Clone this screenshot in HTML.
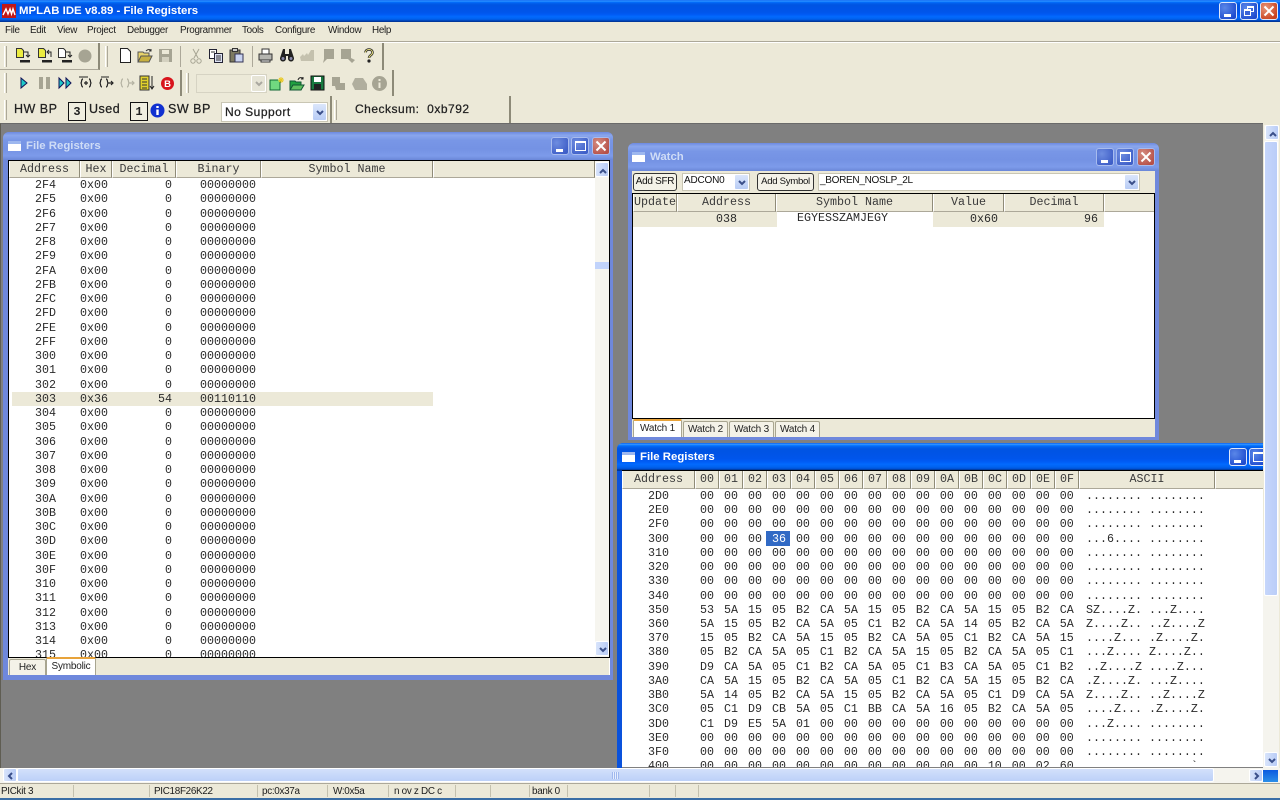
<!DOCTYPE html>
<html><head><meta charset="utf-8"><title>MPLAB IDE v8.89 - File Registers</title>
<style>
html,body{margin:0;padding:0;width:1280px;height:800px;overflow:hidden;background:#ece9d8}
*{box-sizing:border-box}
#app{position:relative;width:1280px;height:800px;overflow:hidden;font-family:"Liberation Sans",sans-serif;color:#000;filter:blur(.3px)}
.a{position:absolute}
.t{position:absolute;white-space:nowrap}
pre{margin:0;position:absolute;font-family:"Liberation Mono",monospace;font-size:11.67px;white-space:pre;color:#2a2a2a}
.hd{position:absolute;background:#ece9d8;border-right:1px solid #8f8b78;border-left:1px solid #fff;border-bottom:1px solid #aca899;font-family:"Liberation Mono",monospace;font-size:11.67px;text-align:center;color:#3a3a3a;white-space:nowrap;overflow:hidden}
.act{background:linear-gradient(#0058ee,#3593ff 4%,#288eff 6%,#127dff 8%,#036ffc 10%,#0262ee 14%,#0057e5 20%,#0054e3 24%,#0055eb 56%,#005bf5 66%,#026afe 76%,#0062ef 86%,#0052d6 92%,#0040ab 94%,#003092 100%)}
.ina{background:linear-gradient(#6d8ae0,#8aa6ec 12%,#7896e6 30%,#7492e4 60%,#7d9bea 85%,#6a86d8)}
.btn{position:absolute;width:18px;height:18px;border:1px solid #dfe8fb;border-radius:3px;background:radial-gradient(circle at 30% 30%,#5a87e8,#1f4ccf 80%)}
.btn.c{background:radial-gradient(circle at 30% 30%,#e8967a,#c9421f 80%)}
.ib{border-color:#a8bcee;background:radial-gradient(circle at 30% 30%,#6e8de0,#3f5fc8 80%)}
.ib.c{background:radial-gradient(circle at 30% 30%,#d58c80,#b65048 80%)}
.sb{position:absolute;border:1px solid #fff;border-radius:2px;background:linear-gradient(90deg,#d8e4fb,#b9ccf6);width:14px;height:15px}
.tab{position:absolute;background:#f4f2e8;border:1px solid #a8a590;border-bottom:0;font-size:10px;letter-spacing:-.2px;text-align:center;color:#222;white-space:nowrap;border-radius:2px 2px 0 0}
.tab.s{background:#fff;border-top:2px solid #e8a33a}
.tb{position:absolute;background:#ece9d8;border-right:2px solid #8d8a78;border-bottom:1px solid #aca899}
.grip{position:absolute;width:3px;background:#ece9d8;border-left:1px solid #fff;border-right:1px solid #aca899}
.sep{position:absolute;width:1px;background:#aca899}
svg{position:absolute;overflow:visible}
.m{position:absolute;font-size:9.9px;letter-spacing:-.3px;top:25px;color:#1c1c1c;white-space:nowrap}
.st{position:absolute;font-size:9.9px;letter-spacing:-.3px;top:786px;color:#1c1c1c;white-space:nowrap}
.ss{position:absolute;top:785px;height:12px;width:1px;background:#c4c1ae}
.combo{position:absolute;background:#fff;border:1px solid #c9c6b4}
.pb{position:absolute;border:1px solid #333;border-radius:3px;background:#f4f2e8;font-size:10px;letter-spacing:-.3px;text-align:center;white-space:nowrap;color:#111;overflow:hidden}
.dd{position:absolute;background:linear-gradient(#dbe6fb,#b8ccf5);border:1px solid #fff;border-radius:2px}
.box{position:absolute;border:1px solid #111;background:#f0eee0;font-family:"Liberation Mono",monospace;font-size:12px;text-align:center;font-weight:bold;color:#222}
.b3{font-size:12.5px;color:#222;letter-spacing:.5px;-webkit-text-stroke:.25px #222}
.wt{position:absolute;white-space:nowrap;font-size:11.4px;font-weight:bold}
</style></head><body><div id="app">

<!-- main title -->
<div class="a act" style="left:0;top:0;width:1280px;height:22px"></div>
<svg style="left:2px;top:4px" width="14" height="14" viewBox="0 0 14 14"><rect width="14" height="14" fill="#c01818"/><path d="M1 11L4 5l2 5 2-5 1.500 5L11 5l2 6" stroke="#fff" stroke-width="1.400" fill="none"/></svg>
<div class="wt" style="left:19px;top:5px;color:#fff">MPLAB IDE v8.89 - File Registers</div>
<div class="btn" style="left:1219px;top:2px"><div class="a" style="left:4px;top:11px;width:7px;height:3px;background:#fff"></div></div>
<div class="btn" style="left:1240px;top:2px"><div class="a" style="left:6px;top:3px;width:7px;height:6px;border:1px solid #fff;border-top-width:2px"></div><div class="a" style="left:3px;top:6px;width:7px;height:7px;border:1px solid #fff;border-top-width:2px;background:#3a63d8"></div></div>
<div class="btn c" style="left:1260px;top:2px"><svg width="16" height="16" viewBox="0 0 16 16"><path d="M3.500 3.500l9 9M12.500 3.500l-9 9" stroke="#fff" stroke-width="2"/></svg></div>

<!-- menu -->
<div class="a" style="left:0;top:22px;width:1280px;height:19px;background:#ece9d8"></div>
<div class="a" style="left:0;top:41px;width:1280px;height:1px;background:#aca899"></div>
<div class="a" style="left:0;top:42px;width:1280px;height:1px;background:#fff"></div>
<div class="m" style="left:5px">File</div><div class="m" style="left:30px">Edit</div><div class="m" style="left:57px">View</div><div class="m" style="left:87px">Project</div><div class="m" style="left:127px">Debugger</div><div class="m" style="left:180px">Programmer</div><div class="m" style="left:242px">Tools</div><div class="m" style="left:275px">Configure</div><div class="m" style="left:328px">Window</div><div class="m" style="left:372px">Help</div>

<!-- toolbars -->
<div class="tb" style="left:0;top:43px;width:100px;height:27px"></div>
<div class="tb" style="left:100px;top:43px;width:284px;height:27px;border-bottom:0"></div>
<div class="grip" style="left:4px;top:46px;height:21px"></div>
<div class="grip" style="left:105px;top:46px;height:21px"></div>
<div class="sep" style="left:180px;top:46px;height:21px"></div>
<div class="sep" style="left:252px;top:46px;height:21px"></div>
<div class="tb" style="left:0;top:70px;width:182px;height:26px;border-bottom:0"></div>
<div class="tb" style="left:182px;top:70px;width:212px;height:26px;border-bottom:0"></div>
<div class="grip" style="left:4px;top:73px;height:20px"></div>
<div class="grip" style="left:186px;top:73px;height:20px"></div>

<!-- row 1 icons -->
<svg style="left:15px;top:48px" width="16" height="16" viewBox="0 0 16 16"><path d="M1.500.5h5l2 2v7h-7z" fill="#ecec40" stroke="#333"/><path d="M9 4h4v4m-2-1l2 2 2-2" stroke="#222" fill="none"/><path d="M5 12h10v2.500H5z" fill="#222"/></svg>
<svg style="left:37px;top:48px" width="16" height="16" viewBox="0 0 16 16"><path d="M1.500.5h5l2 2v7h-7z" fill="#ecec40" stroke="#333"/><path d="M14 9V4h-4m2-2l-2 2 2 2" stroke="#222" fill="none"/><path d="M5 12h10v2.500H5z" fill="#222"/></svg>
<svg style="left:57px;top:48px" width="16" height="16" viewBox="0 0 16 16"><path d="M1.500.5h5l2 2v7h-7z" fill="#fff" stroke="#333"/><path d="M9 4h4v4m-2-1l2 2 2-2" stroke="#222" fill="none"/><path d="M5 12h10v2.500H5z" fill="#222"/></svg>
<svg style="left:78px;top:49px" width="14" height="14" viewBox="0 0 14 14"><circle cx="7" cy="7" r="6.500" fill="#a6a493"/></svg>
<svg style="left:119px;top:48px" width="13" height="15" viewBox="0 0 13 15"><path d="M1.500.5h7l3 3v11h-10z" fill="#fff" stroke="#222"/></svg>
<svg style="left:137px;top:48px" width="16" height="15" viewBox="0 0 16 15"><path d="M1 4h5l1 1h5v9H1z" fill="#e8d36a" stroke="#555"/><path d="M1 14l3-6h11l-3 6z" fill="#c7b040" stroke="#555"/><path d="M9 3c2-2 4-2 5 0m0-2v2h-2" stroke="#333" fill="none"/></svg>
<svg style="left:159px;top:49px" width="13" height="13" viewBox="0 0 13 13"><rect width="13" height="13" fill="#a6a493"/><rect x="3" y="1" width="7" height="4" fill="#ece9d8"/><rect x="3" y="8" width="7" height="5" fill="#d4d1c0"/></svg>
<svg style="left:190px;top:48px" width="12" height="16" viewBox="0 0 12 16"><path d="M3 1l5 9M9 1l-5 9" stroke="#a6a493" fill="none"/><circle cx="3" cy="13" r="2.200" fill="none" stroke="#a6a493"/><circle cx="9" cy="13" r="2.200" fill="none" stroke="#a6a493"/></svg>
<svg style="left:209px;top:49px" width="14" height="14" viewBox="0 0 14 14"><path d="M.5.5h7v9h-7z" fill="#fff" stroke="#223"/><path d="M5.500 4.500h8v9h-8z" fill="#dde2f5" stroke="#223"/><path d="M7 7h5M7 9h5M7 11h5M2 3h4" stroke="#333"/></svg>
<svg style="left:229px;top:48px" width="15" height="15" viewBox="0 0 15 15"><rect x="1" y="2" width="10" height="12" fill="#7d7a60" stroke="#333"/><rect x="3.500" y="0.500" width="5" height="3" fill="#ccc" stroke="#333"/><rect x="6" y="6" width="8" height="8" fill="#c9d3f0" stroke="#335"/></svg>
<svg style="left:258px;top:48px" width="15" height="15" viewBox="0 0 15 15"><path d="M4 1h7v5H4z" fill="#fff" stroke="#333"/><path d="M1 6h13v6H1z" fill="#b5b5b0" stroke="#333"/><path d="M3 12h9v2H3z" fill="#fff" stroke="#333"/></svg>
<svg style="left:279px;top:49px" width="16" height="13" viewBox="0 0 16 13"><path d="M4 0h2v5h4V0h2l3 9a3 3 0 01-6 1V7H7v3a3 3 0 01-6-1z" fill="#222"/><circle cx="4" cy="9.500" r="1.500" fill="#88a"/><circle cx="12" cy="9.500" r="1.500" fill="#88a"/></svg>
<svg style="left:300px;top:49px" width="15" height="13" viewBox="0 0 15 13"><path d="M0 8l3-3 1 2 3-3 1 2 3-5h3v11H1z" fill="#c4c1ae"/></svg>
<svg style="left:320px;top:49px" width="14" height="14" viewBox="0 0 14 14"><path d="M4 0h10v10H7l-4 4 1-4z" fill="#a6a493"/></svg>
<svg style="left:341px;top:49px" width="14" height="14" viewBox="0 0 14 14"><path d="M0 0h10v9l4 2-3 3-4-4H0z" fill="#a6a493"/></svg>
<svg style="left:363px;top:48px" width="12" height="15" viewBox="0 0 12 15"><path d="M2.500 4.500c0-4 7-4 7 0 0 3-3.500 2.500-3.500 5.500" stroke="#222" stroke-width="2.400" fill="none"/><path d="M2.500 4.500c0-4 7-4 7 0 0 3-3.500 2.500-3.500 5.500" stroke="#e8e080" stroke-width="1" fill="none"/><circle cx="6" cy="13" r="1.600" fill="#222"/></svg>

<!-- row 2 icons -->
<svg style="left:20px;top:77px" width="8" height="12" viewBox="0 0 8 12"><path d="M1 1l6 5-6 5z" fill="#1ec8c8" stroke="#115"/></svg>
<svg style="left:39px;top:77px" width="11" height="12" viewBox="0 0 11 12"><path d="M0 0h4v12H0zM7 0h4v12H7z" fill="#a6a493"/></svg>
<svg style="left:58px;top:77px" width="14" height="12" viewBox="0 0 14 12"><path d="M1 1l5 5-5 5zM8 1l5 5-5 5z" fill="#1ec8c8" stroke="#115"/></svg>
<svg style="left:78px;top:76px" width="15" height="15" viewBox="0 0 15 15"><path d="M1 1h9" stroke="#222"/><path d="M5 3c-2 0-1 3-2 4 1 1 0 4 2 4M11 3c2 0 1 3 2 4-1 1 0 4-2 4M6 7h4m-2-2v4" stroke="#222" fill="none" stroke-width="1.200"/></svg>
<svg style="left:99px;top:76px" width="15" height="15" viewBox="0 0 15 15"><path d="M2 1h8" stroke="#222"/><path d="M3 3c-2 0-1 3-2 4 1 1 0 4 2 4M7 3c2 0 1 3 2 4-1 1 0 4-2 4M9 7h5m-2-2l2 2-2 2" stroke="#222" fill="none" stroke-width="1.200"/></svg>
<svg style="left:120px;top:76px" width="15" height="15" viewBox="0 0 15 15"><path d="M3 3c-2 0-1 3-2 4 1 1 0 4 2 4M7 3c2 0 1 3 2 4-1 1 0 4-2 4M9 7h5m-2-2l2 2-2 2" stroke="#b4b2a2" fill="none" stroke-width="1.200"/></svg>
<svg style="left:139px;top:75px" width="16" height="16" viewBox="0 0 16 16"><rect x="1" y="1" width="9" height="14" fill="#e2d22c" stroke="#333"/><path d="M3 4h5M3 7h5M3 10h5M3 13h5" stroke="#333"/><path d="M13 1v12m-2-2l2 3 2-3" stroke="#222" fill="none"/></svg>
<svg style="left:161px;top:77px" width="13" height="13" viewBox="0 0 13 13"><circle cx="6.500" cy="6.500" r="6.500" fill="#d8141c"/><text x="6.500" y="10" font-size="9.500" font-weight="bold" fill="#fff" text-anchor="middle" font-family="Liberation Sans">B</text></svg>
<div class="a" style="left:196px;top:74px;width:71px;height:19px;background:#ece9d8;border:1px solid #d6d3c3"></div>
<div class="dd" style="left:251px;top:75px;width:15px;height:17px;background:#e6e4d6"><svg style="left:3px;top:5px" width="8" height="6" viewBox="0 0 8 6"><path d="M1 1l3 3 3-3" stroke="#aaa8a0" stroke-width="2" fill="none"/></svg></div>
<svg style="left:269px;top:76px" width="16" height="15" viewBox="0 0 16 15"><rect x="1" y="4" width="10" height="10" fill="#70d880" stroke="#163"/><path d="M12 1v6M9 4h6M10 2l4 4M14 2l-4 4" stroke="#e8c820"/></svg>
<svg style="left:289px;top:76px" width="16" height="15" viewBox="0 0 16 15"><path d="M1 5h5l1 1h5v8H1z" fill="#20a040" stroke="#153"/><path d="M1 14l3-5h11l-3 5z" fill="#60c060" stroke="#153"/><path d="M9 4c1-3 4-3 5-1m0-2v2h-2" stroke="#222" fill="none"/></svg>
<svg style="left:311px;top:76px" width="13" height="14" viewBox="0 0 13 14"><rect width="13" height="14" fill="#187a40" stroke="#111"/><rect x="3" y="1" width="7" height="5" fill="#fff"/><rect x="3" y="8" width="7" height="6" fill="#222"/></svg>
<svg style="left:331px;top:76px" width="15" height="15" viewBox="0 0 15 15"><path d="M1 1h8v6h5v7H5l-1-4H1z" fill="#a6a493"/></svg>
<svg style="left:352px;top:78px" width="15" height="12" viewBox="0 0 15 12"><path d="M3 0h8l4 6v6H3L0 6z" fill="#b0ae9e"/></svg>
<svg style="left:372px;top:76px" width="15" height="15" viewBox="0 0 15 15"><circle cx="7.500" cy="7.500" r="7.500" fill="#a6a493"/><path d="M6.500 3h2v2h-2zM6.500 6.500h2V12h-2z" fill="#ece9d8"/></svg>

<!-- row 3 -->
<div class="a" style="left:0;top:96px;width:1280px;height:27px;background:#ece9d8"></div>
<div class="a" style="left:330px;top:96px;width:2px;height:27px;background:#8d8a78"></div>
<div class="a" style="left:509px;top:96px;width:2px;height:27px;background:#8d8a78"></div>
<div class="grip" style="left:4px;top:100px;height:20px"></div>
<div class="grip" style="left:334px;top:100px;height:20px"></div>
<div class="t b3" style="left:14px;top:102px">HW BP</div>
<div class="box" style="left:68px;top:102px;width:18px;height:19px;line-height:18px">3</div>
<div class="t b3" style="left:89px;top:102px">Used</div>
<div class="box" style="left:130px;top:102px;width:18px;height:19px;line-height:18px">1</div>
<svg style="left:150px;top:103px" width="15" height="15" viewBox="0 0 15 15"><circle cx="7.500" cy="7.500" r="7" fill="#1030d0"/><path d="M6.300 3h2.400v2H6.300zM6.300 6.500h2.400V12H6.300z" fill="#fff"/></svg>
<div class="t b3" style="left:168px;top:102px">SW BP</div>
<div class="combo" style="left:221px;top:102px;width:107px;height:20px"></div>
<div class="t b3" style="left:225px;top:105px;font-size:12px">No Support</div>
<div class="dd" style="left:312px;top:103px;width:15px;height:18px"><svg style="left:3px;top:6px" width="8" height="6" viewBox="0 0 8 6"><path d="M1 1l3 3 3-3" stroke="#3a4f8a" stroke-width="2" fill="none"/></svg></div>
<div class="t b3" style="left:355px;top:102px;font-size:12px;letter-spacing:.5px;white-space:pre">Checksum:  0xb792</div>

<!-- MDI -->
<div class="a" style="left:0;top:123px;width:1265px;height:645px;background:#808080;border-left:1px solid #5f5d52;border-top:1px solid #6a6a6a"></div>

<!-- Left window -->
<div class="a ina" style="left:3px;top:132px;width:610px;height:548px;border-radius:6px 6px 0 0;background:#6f88dc"></div>
<div class="a ina" style="left:3px;top:132px;width:610px;height:28px;border-radius:6px 6px 0 0"></div>
<div class="a" style="left:8px;top:141px;width:13px;height:10px;background:#fff;border-top:3px solid #9db7ef"></div>
<div class="wt" style="left:26px;top:140px;color:#cfdcf6">File Registers</div>
<div class="btn ib" style="left:551px;top:137px"><div class="a" style="left:4px;top:11px;width:7px;height:3px;background:#fff"></div></div>
<div class="btn ib" style="left:571px;top:137px"><div class="a" style="left:3px;top:3px;width:11px;height:10px;border:1px solid #fff;border-top-width:2px"></div></div>
<div class="btn ib c" style="left:592px;top:137px"><svg width="16" height="16" viewBox="0 0 16 16"><path d="M3.500 3.500l9 9M12.500 3.500l-9 9" stroke="#fff" stroke-width="2"/></svg></div>
<div class="a" style="left:8px;top:160px;width:602px;height:498px;background:#fff;border:1px solid #000;overflow:hidden">
 <div class="hd" style="left:0;top:0;width:71px;height:17px;line-height:16px">Address</div>
 <div class="hd" style="left:71px;top:0;width:32px;height:17px;line-height:16px">Hex</div>
 <div class="hd" style="left:103px;top:0;width:64px;height:17px;line-height:16px">Decimal</div>
 <div class="hd" style="left:167px;top:0;width:85px;height:17px;line-height:16px">Binary</div>
 <div class="hd" style="left:252px;top:0;width:172px;height:17px;line-height:16px">Symbol Name</div>
 <div class="hd" style="left:424px;top:0;width:162px;height:17px;line-height:16px"></div>
 <div class="a" style="left:3px;top:231px;width:421px;height:14px;background:#ece9d8"></div>
 <pre style="left:26px;top:17px;line-height:14.25px">2F4
2F5
2F6
2F7
2F8
2F9
2FA
2FB
2FC
2FD
2FE
2FF
300
301
302
303
304
305
306
307
308
309
30A
30B
30C
30D
30E
30F
310
311
312
313
314
315</pre>
 <pre style="left:71px;top:17px;line-height:14.25px">0x00
0x00
0x00
0x00
0x00
0x00
0x00
0x00
0x00
0x00
0x00
0x00
0x00
0x00
0x00
0x36
0x00
0x00
0x00
0x00
0x00
0x00
0x00
0x00
0x00
0x00
0x00
0x00
0x00
0x00
0x00
0x00
0x00
0x00</pre>
 <pre style="left:149px;top:17px;line-height:14.25px"> 0
 0
 0
 0
 0
 0
 0
 0
 0
 0
 0
 0
 0
 0
 0
54
 0
 0
 0
 0
 0
 0
 0
 0
 0
 0
 0
 0
 0
 0
 0
 0
 0
 0</pre>
 <pre style="left:191px;top:17px;line-height:14.25px">00000000
00000000
00000000
00000000
00000000
00000000
00000000
00000000
00000000
00000000
00000000
00000000
00000000
00000000
00000000
00110110
00000000
00000000
00000000
00000000
00000000
00000000
00000000
00000000
00000000
00000000
00000000
00000000
00000000
00000000
00000000
00000000
00000000
00000000</pre>
 <div class="a" style="left:586px;top:0;width:14px;height:496px;background:#f6f5ef"></div>
 <div class="sb" style="left:586px;top:1px"><svg style="left:3px;top:5px" width="8" height="6" viewBox="0 0 8 6"><path d="M1 5l3-3 3 3" stroke="#3a4f8a" stroke-width="2" fill="none"/></svg></div>
 <div class="a" style="left:586px;top:101px;width:14px;height:7px;background:#c1d3fb"></div>
 <div class="sb" style="left:586px;top:480px"><svg style="left:3px;top:5px" width="8" height="6" viewBox="0 0 8 6"><path d="M1 1l3 3 3-3" stroke="#3a4f8a" stroke-width="2" fill="none"/></svg></div>
</div>
<div class="a" style="left:8px;top:658px;width:602px;height:17px;background:#ece9d8;border-right:1px solid #fff"></div>
<div class="tab" style="left:9px;top:659px;width:37px;height:16px;line-height:16px">Hex</div>
<div class="tab s" style="left:46px;top:657px;width:50px;height:18px;line-height:15px">Symbolic</div>

<!-- Watch -->
<div class="a" style="left:628px;top:143px;width:531px;height:297px;background:#6f88dc;border-radius:6px 6px 0 0"></div>
<div class="a ina" style="left:628px;top:143px;width:531px;height:28px;border-radius:6px 6px 0 0"></div>
<div class="a" style="left:632px;top:152px;width:13px;height:10px;background:#fff;border-top:3px solid #9db7ef"></div>
<div class="wt" style="left:650px;top:151px;color:#cfdcf6">Watch</div>
<div class="btn ib" style="left:1096px;top:148px"><div class="a" style="left:4px;top:11px;width:7px;height:3px;background:#fff"></div></div>
<div class="btn ib" style="left:1116px;top:148px"><div class="a" style="left:3px;top:3px;width:11px;height:10px;border:1px solid #fff;border-top-width:2px"></div></div>
<div class="btn ib c" style="left:1137px;top:148px"><svg width="16" height="16" viewBox="0 0 16 16"><path d="M3.500 3.500l9 9M12.500 3.500l-9 9" stroke="#fff" stroke-width="2"/></svg></div>
<div class="a" style="left:632px;top:171px;width:523px;height:266px;background:#ece9d8"></div>
<div class="pb" style="left:633px;top:173px;width:44px;height:18px;line-height:16px">Add SFR</div>
<div class="combo" style="left:682px;top:173px;width:68px;height:18px"></div>
<div class="t" style="left:684px;top:175px;font-size:10px;letter-spacing:-.2px;color:#111">ADCON0</div>
<div class="dd" style="left:734px;top:174px;width:15px;height:16px"><svg style="left:3px;top:5px" width="8" height="6" viewBox="0 0 8 6"><path d="M1 1l3 3 3-3" stroke="#3a4f8a" stroke-width="2" fill="none"/></svg></div>
<div class="pb" style="left:757px;top:173px;width:57px;height:18px;line-height:16px;font-size:9.6px">Add Symbol</div>
<div class="combo" style="left:818px;top:173px;width:322px;height:18px"></div>
<div class="t" style="left:820px;top:175px;font-size:10px;letter-spacing:-.3px;color:#111">_BOREN_NOSLP_2L</div>
<div class="dd" style="left:1124px;top:174px;width:15px;height:16px"><svg style="left:3px;top:5px" width="8" height="6" viewBox="0 0 8 6"><path d="M1 1l3 3 3-3" stroke="#3a4f8a" stroke-width="2" fill="none"/></svg></div>
<div class="a" style="left:632px;top:193px;width:523px;height:226px;background:#fff;border:1px solid #000;overflow:hidden">
 <div class="hd" style="left:0;top:0;width:44px;height:18px;line-height:16px">Update</div>
 <div class="hd" style="left:44px;top:0;width:99px;height:18px;line-height:16px">Address</div>
 <div class="hd" style="left:143px;top:0;width:157px;height:18px;line-height:16px">Symbol Name</div>
 <div class="hd" style="left:300px;top:0;width:71px;height:18px;line-height:16px">Value</div>
 <div class="hd" style="left:371px;top:0;width:100px;height:18px;line-height:16px">Decimal</div>
 <div class="hd" style="left:471px;top:0;width:52px;height:18px"></div>
 <div class="a" style="left:0;top:18px;width:471px;height:15px;background:#ece9d8"></div>
 <div class="a" style="left:144px;top:18px;width:156px;height:15px;background:#fff"></div>
 <pre style="left:83px;top:18px;line-height:15px">038</pre>
 <pre style="left:164px;top:17px;line-height:15px">EGYESSZAMJEGY</pre>
 <pre style="left:337px;top:18px;line-height:15px">0x60</pre>
 <pre style="left:451px;top:18px;line-height:15px">96</pre>
</div>
<div class="tab s" style="left:633px;top:419px;width:49px;height:18px;line-height:15px">Watch 1</div>
<div class="tab" style="left:683px;top:421px;width:45px;height:16px;line-height:15px">Watch 2</div>
<div class="tab" style="left:729px;top:421px;width:45px;height:16px;line-height:15px">Watch 3</div>
<div class="tab" style="left:775px;top:421px;width:45px;height:16px;line-height:15px">Watch 4</div>

<!-- Hex window -->
<div class="a" style="left:617px;top:443px;width:646px;height:325px;background:#0a52dc;border-radius:6px 0 0 0;overflow:hidden">
 <div class="a act" style="left:0;top:0;width:648px;height:28px"></div>
 <div class="a" style="left:5px;top:9px;width:13px;height:10px;background:#fff;border-top:3px solid #9db7ef"></div>
 <div class="wt" style="left:23px;top:8px;color:#fff">File Registers</div>
 <div class="btn" style="left:612px;top:5px"><div class="a" style="left:4px;top:11px;width:7px;height:3px;background:#fff"></div></div>
 <div class="btn" style="left:632px;top:5px"><div class="a" style="left:3px;top:3px;width:11px;height:10px;border:1px solid #fff;border-top-width:2px"></div></div>
</div>
<div class="a" style="left:622px;top:470px;width:641px;height:298px;background:#fff;border-top:1px solid #000;overflow:hidden">
 <div class="hd" style="left:0;top:0;width:73px;height:18px;line-height:17px">Address</div>
 <div class="hd" style="left:73px;top:0;width:24px;height:18px;line-height:17px">00</div>
 <div class="hd" style="left:97px;top:0;width:24px;height:18px;line-height:17px">01</div>
 <div class="hd" style="left:121px;top:0;width:24px;height:18px;line-height:17px">02</div>
 <div class="hd" style="left:145px;top:0;width:24px;height:18px;line-height:17px">03</div>
 <div class="hd" style="left:169px;top:0;width:24px;height:18px;line-height:17px">04</div>
 <div class="hd" style="left:193px;top:0;width:24px;height:18px;line-height:17px">05</div>
 <div class="hd" style="left:217px;top:0;width:24px;height:18px;line-height:17px">06</div>
 <div class="hd" style="left:241px;top:0;width:24px;height:18px;line-height:17px">07</div>
 <div class="hd" style="left:265px;top:0;width:24px;height:18px;line-height:17px">08</div>
 <div class="hd" style="left:289px;top:0;width:24px;height:18px;line-height:17px">09</div>
 <div class="hd" style="left:313px;top:0;width:24px;height:18px;line-height:17px">0A</div>
 <div class="hd" style="left:337px;top:0;width:24px;height:18px;line-height:17px">0B</div>
 <div class="hd" style="left:361px;top:0;width:24px;height:18px;line-height:17px">0C</div>
 <div class="hd" style="left:385px;top:0;width:24px;height:18px;line-height:17px">0D</div>
 <div class="hd" style="left:409px;top:0;width:24px;height:18px;line-height:17px">0E</div>
 <div class="hd" style="left:433px;top:0;width:24px;height:18px;line-height:17px">0F</div>
 <div class="hd" style="left:457px;top:0;width:136px;height:18px;line-height:17px">ASCII</div>
 <div class="hd" style="left:593px;top:0;width:50px;height:18px;border-right:0"></div>
 <div class="a" style="left:144px;top:60px;width:24px;height:15px;background:#316ac5"></div>
 <pre style="left:26px;top:18px;line-height:14.22px">2D0
2E0
2F0
300
310
320
330
340
350
360
370
380
390
3A0
3B0
3C0
3D0
3E0
3F0
400</pre>
 <pre style="left:78px;top:18px;line-height:14.22px;word-spacing:3px">00 00 00 00 00 00 00 00 00 00 00 00 00 00 00 00
00 00 00 00 00 00 00 00 00 00 00 00 00 00 00 00
00 00 00 00 00 00 00 00 00 00 00 00 00 00 00 00
00 00 00 <span style="color:#fff">36</span> 00 00 00 00 00 00 00 00 00 00 00 00
00 00 00 00 00 00 00 00 00 00 00 00 00 00 00 00
00 00 00 00 00 00 00 00 00 00 00 00 00 00 00 00
00 00 00 00 00 00 00 00 00 00 00 00 00 00 00 00
00 00 00 00 00 00 00 00 00 00 00 00 00 00 00 00
53 5A 15 05 B2 CA 5A 15 05 B2 CA 5A 15 05 B2 CA
5A 15 05 B2 CA 5A 05 C1 B2 CA 5A 14 05 B2 CA 5A
15 05 B2 CA 5A 15 05 B2 CA 5A 05 C1 B2 CA 5A 15
05 B2 CA 5A 05 C1 B2 CA 5A 15 05 B2 CA 5A 05 C1
D9 CA 5A 05 C1 B2 CA 5A 05 C1 B3 CA 5A 05 C1 B2
CA 5A 15 05 B2 CA 5A 05 C1 B2 CA 5A 15 05 B2 CA
5A 14 05 B2 CA 5A 15 05 B2 CA 5A 05 C1 D9 CA 5A
05 C1 D9 CB 5A 05 C1 BB CA 5A 16 05 B2 CA 5A 05
C1 D9 E5 5A 01 00 00 00 00 00 00 00 00 00 00 00
00 00 00 00 00 00 00 00 00 00 00 00 00 00 00 00
00 00 00 00 00 00 00 00 00 00 00 00 00 00 00 00
00 00 00 00 00 00 00 00 00 00 00 00 10 00 02 60</pre>
 <pre style="left:464px;top:18px;line-height:14.22px">........ ........
........ ........
........ ........
...6.... ........
........ ........
........ ........
........ ........
........ ........
SZ....Z. ...Z....
Z....Z.. ..Z....Z
....Z... .Z....Z.
...Z.... Z....Z..
..Z....Z ....Z...
.Z....Z. ...Z....
Z....Z.. ..Z....Z
....Z... .Z....Z.
...Z.... ........
........ ........
........ ........
........ ......`</pre>
</div>
<div class="a" style="left:622px;top:767px;width:641px;height:1px;background:#808080"></div>

<!-- main v scroll -->
<div class="a" style="left:1263px;top:123px;width:17px;height:647px;background:#ece9d8"></div>
<div class="a" style="left:1263px;top:560px;width:16px;height:208px;background:#f5f4ee"></div>
<div class="a" style="left:1264px;top:125px;width:15px;height:643px;background:#f5f4ee"></div>
<div class="a" style="left:1264px;top:141px;width:14px;height:455px;background:linear-gradient(90deg,#c6d6fb,#bacdf8);border:1px solid #fff;border-radius:2px"></div>
<div class="sb" style="left:1265px;top:125px"><svg style="left:3px;top:5px" width="8" height="6" viewBox="0 0 8 6"><path d="M1 5l3-3 3 3" stroke="#3a4f8a" stroke-width="2" fill="none"/></svg></div>
<div class="sb" style="left:1264px;top:752px"><svg style="left:3px;top:5px" width="8" height="6" viewBox="0 0 8 6"><path d="M1 1l3 3 3-3" stroke="#3a4f8a" stroke-width="2" fill="none"/></svg></div>

<!-- main h scroll -->
<div class="a" style="left:0;top:768px;width:1280px;height:15px;background:#f5f4ee"></div>
<div class="a" style="left:17px;top:768px;width:1197px;height:14px;background:linear-gradient(#d3e0fb,#bcd0f8);border:1px solid #fff;border-radius:2px"></div>
<div class="a" style="left:612px;top:772px;width:7px;height:7px;background:repeating-linear-gradient(90deg,#9fb8ee 0 1px,#e6eefe 1px 2px)"></div>
<div class="sb" style="left:3px;top:768px;height:14px"><svg style="left:3px;top:3px" width="6" height="8" viewBox="0 0 6 8"><path d="M5 1L2 4l3 3" stroke="#3a4f8a" stroke-width="2" fill="none"/></svg></div>
<div class="sb" style="left:1249px;top:769px;height:13px"><svg style="left:4px;top:2px" width="6" height="8" viewBox="0 0 6 8"><path d="M1 1l3 3-3 3" stroke="#3a4f8a" stroke-width="2" fill="none"/></svg></div>
<div class="a" style="left:1263px;top:770px;width:15px;height:12px;background:linear-gradient(#0a5ae0,#2a8ee8)"></div>

<!-- status -->
<div class="a" style="left:0;top:783px;width:1280px;height:1px;background:#aca899"></div>
<div class="a" style="left:0;top:784px;width:1280px;height:14px;background:#ece9d8"></div>
<div class="a" style="left:0;top:798px;width:1280px;height:2px;background:#3a6ea5"></div>
<div class="st" style="left:1px">PICkit 3</div>
<div class="st" style="left:154px">PIC18F26K22</div>
<div class="st" style="left:262px">pc:0x37a</div>
<div class="st" style="left:333px">W:0x5a</div>
<div class="st" style="left:394px">n ov z DC c</div>
<div class="st" style="left:532px">bank 0</div>
<div class="ss" style="left:73px"></div><div class="ss" style="left:149px"></div><div class="ss" style="left:257px"></div><div class="ss" style="left:327px"></div><div class="ss" style="left:388px"></div><div class="ss" style="left:455px"></div><div class="ss" style="left:490px"></div><div class="ss" style="left:529px"></div><div class="ss" style="left:567px"></div><div class="ss" style="left:649px"></div><div class="ss" style="left:675px"></div><div class="ss" style="left:698px"></div>

</div></body></html>
